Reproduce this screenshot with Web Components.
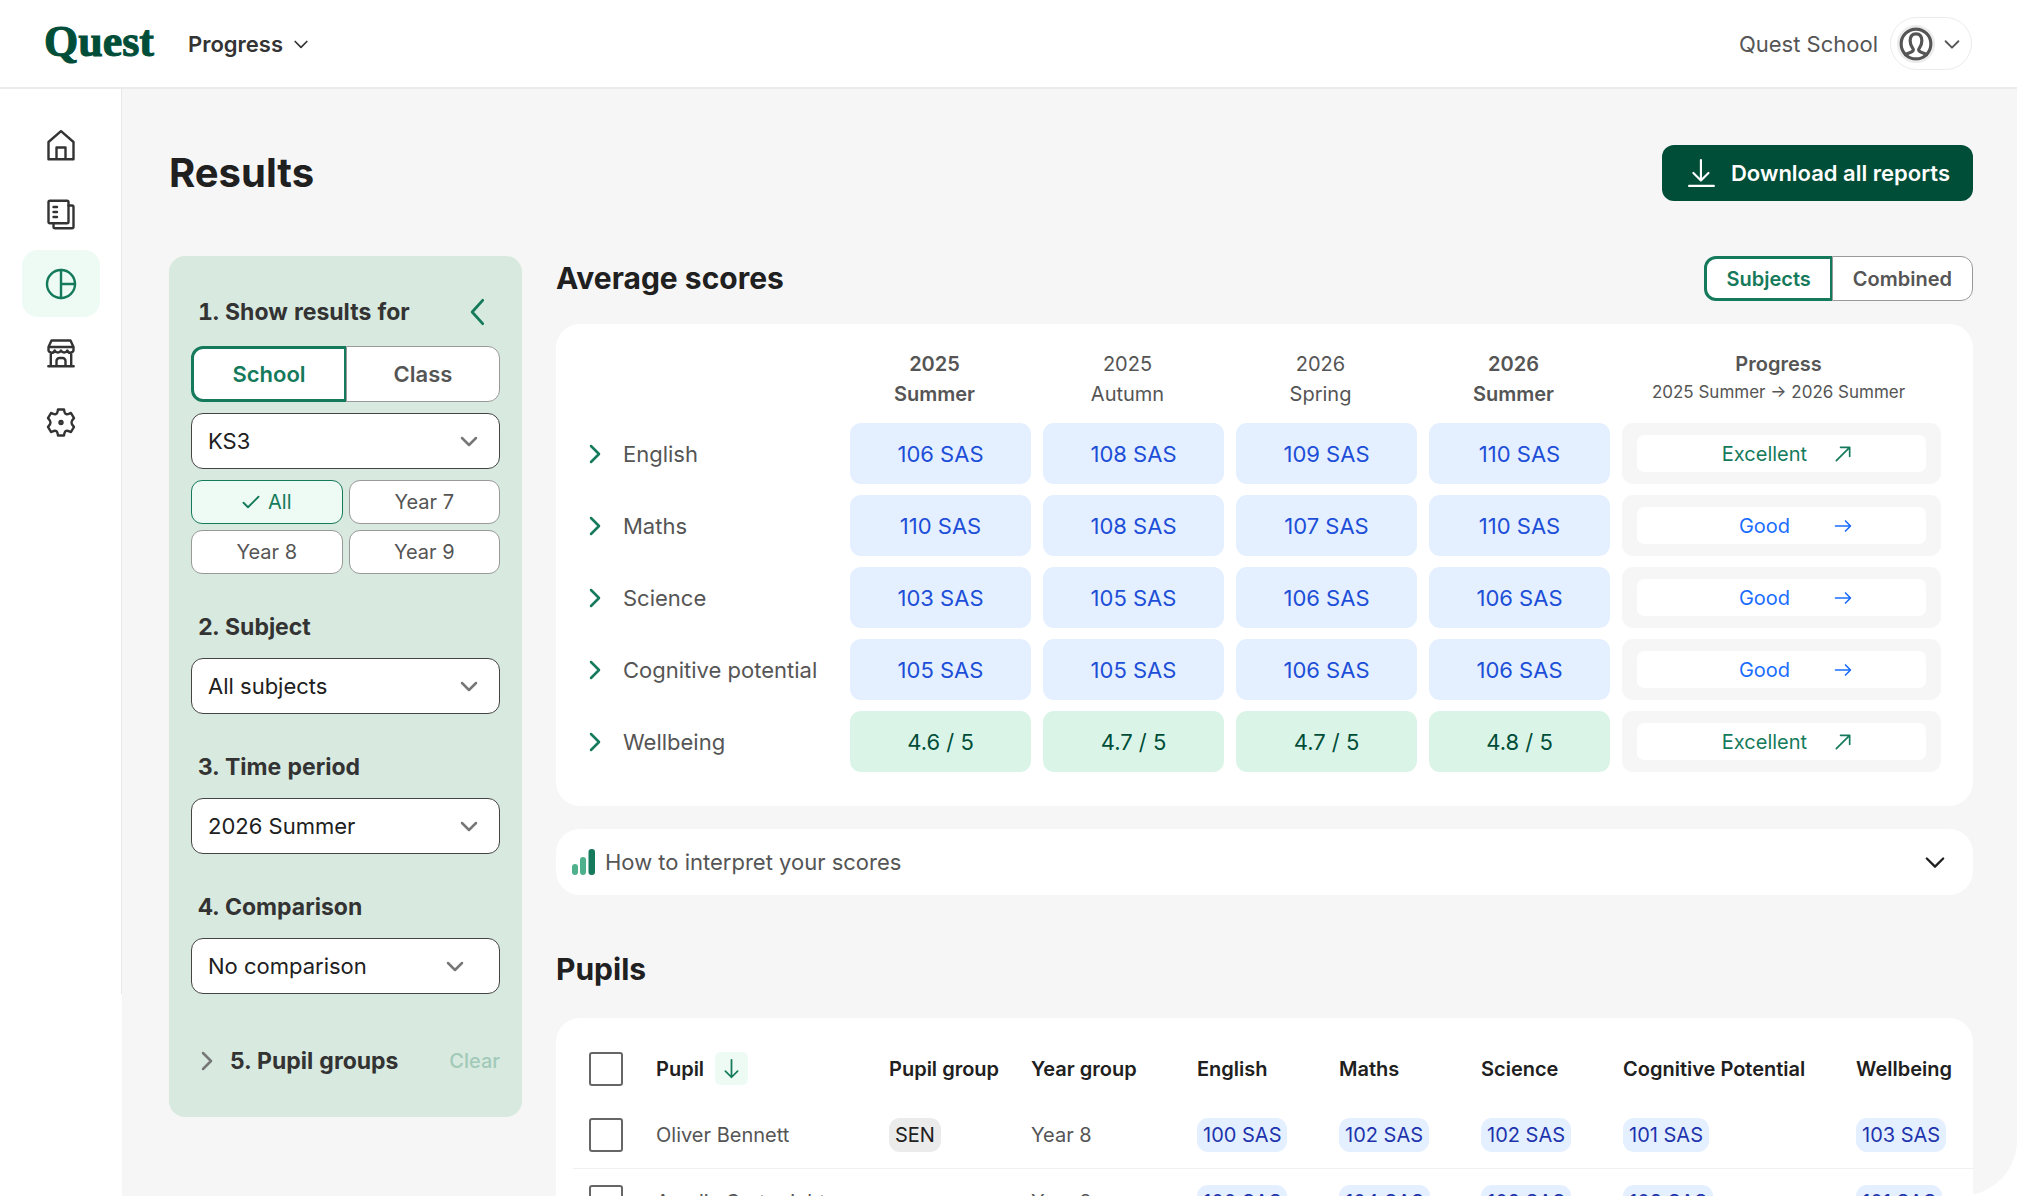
<!DOCTYPE html>
<html lang="en">
<head>
<meta charset="utf-8">
<meta name="viewport" content="width=device-width, initial-scale=1">
<title>Quest - Results</title>
<style>
    :root{
        --green-900: #004d38;
        --green-600: #157a5b;
        --green-100: #daf5e8;
        --green-50: #edfbf4;
        --panel: #d8e9df;
        --blue-100: #e4f0ff;
        --blue-700: #1d4ed8;
        --blue-500: #1a6dff;
        --blue-900: #1e34ad;
        --bg-page: #f6f6f6;
        --line: #ebebeb;
        --text: #202020;
        --text-soft: #333333;
        --text-muted: #555555;
    }
    body{
        margin:0;
        font-family: Inter, "Liberation Sans", sans-serif;
        font-size: 22px;
        color: var(--text-muted);
        background: #fff;
    }
</style>
</head>
<body>
<quest-app></quest-app>

<script>
const ICONS = {
    'chevron-down': '<path d="M5 9l7 7 7-7"/>',
    'chevron-right': '<path d="M8 4l8 8-8 8"/>',
    'chevron-left': '<path d="M16 2L7 12l9 10"/>',
    'arrow-right': '<path d="M3 12h18M15 6l6 6-6 6"/>',
    'arrow-up-right': '<path d="M4 20L20 4M9 4h11v11"/>',
    'arrow-down': '<path d="M12 2v20M5 15l7 7 7-7"/>',
    'check': '<path d="M2 13l6 6L22 5"/>',
    'download': '<path d="M12 1v19M5 13l7 7 7-7M1 25h23"/>',
    'home': '<path d="M3.500 12L16 1.200 28.500 12v17.300h-25zM11.500 29V17.500h9V29"/>',
    'reports': '<rect x="3.500" y="1.700" width="20" height="22.500" rx="1.500"/><path d="M23.500 6.500H27a1.500 1.500 0 0 1 1.500 1.500v19.800a1.500 1.500 0 0 1-1.500 1.500H10a1.500 1.500 0 0 1-1.500-1.500v-3.500M8.500 8h3.500M8.500 13h3.500M8.500 18h3.500"/>',
    'results': '<circle cx="16" cy="16" r="14"/><path d="M16 2v28M16 16h14"/>',
    'store': '<path d="M6.500 3.500h19l3 6.500h-25zM5.800 15.500V29M26.200 15.500V29M3.300 29.200h25.400M3.500 10v2a3.200 3.200 0 0 0 6.200 1.500 3.500 3.500 0 0 0 6.300 0 3.500 3.500 0 0 0 6.300 0A3.200 3.200 0 0 0 28.500 12v-2M11.500 29v-5a3 3 0 0 1 3-3h3a3 3 0 0 1 3 3v5"/>',
    'settings': '<path d="M13 3.500h6c.3 1.500.3 4 2.200 4.600 1.800.6 3.200-.8 4.800-1.100l3 5.200c-1 1.200-2.500 2.300-2.500 4.300s1.500 3.100 2.500 4.300l-3 5.200c-1.600-.3-3-1.700-4.800-1.100-1.900.6-1.900 3.100-2.200 4.600h-6c-.3-1.500-.3-4-2.200-4.600-1.800-.6-3.200.8-4.800 1.100l-3-5.200c1-1.200 2.500-2.300 2.500-4.300s-1.500-3.100-2.500-4.300L6 7c1.600.3 3 1.700 4.800 1.100 1.900-.6 1.900-3.100 2.200-4.600z"/><circle cx="16" cy="16.500" r="1.500"/>',
    'avatar': '<circle cx="16" cy="16" r="14"/><path d="M6 26c2-1.800 7.500-1.500 7.500-4.500 0-2-3-3-3-8.500 0-4 2-6.500 5.500-6.500s5.500 2.500 5.500 6.500c0 5.500-3 6.500-3 8.500 0 3 5.500 2.700 7.500 4.500"/>'
};
const WIDE_BOX = ['home', 'reports', 'results', 'store', 'settings', 'avatar'];

class QuestIcon extends HTMLElement{
    static get observedAttributes() {
    return ['name'];
    }
    constructor() {
    super();
    this.attachShadow({ mode: 'open' });
    }
    connectedCallback() {
    this.render();
    }
    attributeChangedCallback(name, oldValue, newValue) {
    if (oldValue !== newValue) {
    this.render();
    }
    }
    render() {
        const name = this.getAttribute('name');
        let box = WIDE_BOX.includes(name) ? 32 : 24;
        if (name === 'download') box = 26;
        this.shadowRoot.innerHTML = /*html*/ `
        <style>
            :host{
                display:block;
                flex:none;
                width: var(--icon-size, 24px);
                height: var(--icon-size, 24px);
            }
            svg{
                display:block;
                width:100%;
                height:100%;
                fill:none;
                stroke:currentColor;
                stroke-width: var(--icon-stroke, 2);
                stroke-linecap:round;
                stroke-linejoin:round;
            }
        </style>
        <svg viewBox="0 0 ${box} ${box}" aria-hidden="true">${ICONS[name] || ''}</svg>
        `;
    }
}
customElements.define("quest-icon", QuestIcon);

class QuestHeader extends HTMLElement{
    constructor() {
    super();
    this.attachShadow({ mode: 'open' });
    }
    connectedCallback() {
    this.render();
    }
    render() {
        this.shadowRoot.innerHTML = /*html*/ `
        <style>
            :host{
                display:block;
                background:#fff;
                border-bottom:2px solid var(--line);
            }
            header{
                display:flex;
                align-items:center;
                gap:34px;
                height:87px;
                padding:0 45px 0 44px;
            }
            button{
                font:inherit;
                color:inherit;
                background:none;
                border:0;
                padding:0;
                display:flex;
                align-items:center;
            }
            .logo{
                padding-bottom:4px;
                font-family:"Liberation Serif", serif;
                font-weight:700;
                font-size:44px;
                line-height:48px;
                color:var(--green-900);
                text-decoration:none;
                -webkit-text-stroke:1px currentColor;
            }
            .product{
                font-weight:600;
                color:var(--text-soft);
                gap:8px;
                --icon-size:20px;
            }
            .account{
                margin-left:auto;
                display:flex;
                align-items:center;
                gap:12px;
            }
            .user{
                height:53px;
                padding:0 8px 0 6px;
                gap:6px;
                border:1px solid var(--line);
                border-radius:27px;
                --icon-size:22px;
            }
            .avatar{
                border:2px solid var(--line);
                border-radius:50%;
                --icon-size:34px;
                --icon-stroke:3;
            }
        </style>
        <header>
            <a class="logo" href="#">Quest</a>
            <button class="product" type="button">Progress <quest-icon name="chevron-down"></quest-icon></button>
            <div class="account">
                <span>Quest School</span>
                <button class="user" type="button" aria-label="Account menu">
                    <span class="avatar"><quest-icon name="avatar"></quest-icon></span>
                    <quest-icon name="chevron-down"></quest-icon>
                </button>
            </div>
        </header>
        `;
    }
}
customElements.define("quest-header", QuestHeader);

class QuestSidebar extends HTMLElement{
    constructor() {
    super();
    this.attachShadow({ mode: 'open' });
    }
    connectedCallback() {
    this.render();
    }
    render() {
        const items = [
            ['home', 'Home'],
            ['reports', 'Reports'],
            ['results', 'Results'],
            ['store', 'Store'],
            ['settings', 'Settings']
        ];
        this.shadowRoot.innerHTML = /*html*/ `
        <style>
            :host{
                display:block;
                flex:none;
                width:122px;
                background:#fff;
            }
            nav{
                display:grid;
                justify-items:center;
                gap:2px;
                padding:23px 0 539px;
                border-right:1px solid #e8e8e8;
            }
            a{
                display:grid;
                place-items:center;
                width:78px;
                height:67px;
                border-radius:16px;
                color:var(--text-soft);
                --icon-size:32px;
                --icon-stroke:2.4;
            }
            a.active{
                color:var(--green-600);
                background:var(--green-50);
            }
        </style>
        <nav aria-label="Main">
            ${items.map(([icon, label]) => `<a href="#" aria-label="${label}" class="${icon === 'results' ? 'active' : ''}"><quest-icon name="${icon}"></quest-icon></a>`).join('')}
        </nav>
        `;
    }
}
customElements.define("quest-sidebar", QuestSidebar);

// two-way switch, first option is the selected one
class QuestToggle extends HTMLElement{
    constructor() {
    super();
    this.attachShadow({ mode: 'open' });
    }
    connectedCallback() {
    this.render();
    this._setupEventListeners();
    }
    _setupEventListeners() {
        this.shadowRoot.addEventListener('click', (e) => {
            const button = e.target.closest('button');
            if (!button) return;
            this.shadowRoot.querySelectorAll('button').forEach((b) => {
                b.setAttribute('aria-pressed', b === button);
            });
        });
    }
    render() {
        const options = this.getAttribute('options').split(',');
        this.shadowRoot.innerHTML = /*html*/ `
        <style>
            :host{
                display:flex;
            }
            button{
                flex:1 1 auto;
                height:56px;
                padding:0 20px;
                font:inherit;
                font-weight:600;
                color:var(--text-muted);
                background:#fff;
                border:1px solid #999;
            }
            button:first-of-type{
                border-radius:12px 0 0 12px;
            }
            button:last-of-type{
                border-radius:0 12px 12px 0;
            }
            button[aria-pressed="true"]{
                color:var(--green-600);
                border:3px solid var(--green-600);
                border-right-width:2px;
                padding:0 19px;
            }
            :host([small]) button{
                height:45px;
                font-size:20px;
            }
            :host([block]) button{
                flex:1 1 0;
            }
        </style>
        ${options.map((text, i) => `<button type="button" aria-pressed="${i === 0}">${text}</button>`).join('')}
        `;
    }
}
customElements.define("quest-toggle", QuestToggle);

class QuestSelect extends HTMLElement{
    constructor() {
    super();
    this.attachShadow({ mode: 'open' });
    }
    connectedCallback() {
    this.render();
    }
    render() {
        const number = this.getAttribute('number');
        const label = this.getAttribute('label');
        this.shadowRoot.innerHTML = /*html*/ `
        <style>
            :host{
                display:block;
            }
            label{
                display:flex;
                gap:6px;
                font-size:23px;
                line-height:28px;
                margin-bottom:17px;
                font-weight:700;
                font-variant-numeric:tabular-nums;
                color:var(--text-soft);
            }
            label span{
                width:28px;
                text-align:right;
            }
            .box{
                display:grid;
                align-items:center;
            }
            select, quest-icon{
                grid-area:1 / 1;
            }
            select{
                appearance:none;
                width:100%;
                height:56px;
                padding:0 56px 0 16px;
                font:inherit;
                color:var(--text);
                background:#fff;
                border:1px solid #444;
                border-radius:12px;
            }
            quest-icon{
                justify-self:end;
                margin-right:19px;
                color:#777;
                pointer-events:none;
                --icon-stroke:2.5;
            }
            :host([inset]) quest-icon{
                margin-right:33px;
            }
        </style>
        ${number ? `<label for="field"><span>${number}.</span>${label}</label>` : ''}
        <div class="box">
            <select id="field" aria-label="${label}"><option>${this.getAttribute('value')}</option></select>
            <quest-icon name="chevron-down"></quest-icon>
        </div>
        `;
    }
}
customElements.define("quest-select", QuestSelect);

class QuestFilters extends HTMLElement{
    constructor() {
    super();
    this.attachShadow({ mode: 'open' });
    }
    connectedCallback() {
    this.render();
    }
    render() {
        this.shadowRoot.innerHTML = /*html*/ `
        <style>
            :host{
                display:block;
                box-sizing:border-box;
                flex:none;
                width:353px;
                padding:42px 22px;
                border-radius:16px;
                background:var(--panel);
            }
            h2{
                display:flex;
                gap:6px;
                margin:0;
                font-size:23px;
                line-height:28px;
                font-weight:700;
                font-variant-numeric:tabular-nums;
                color:var(--text-soft);
            }
            h2 span{
                width:28px;
                text-align:right;
            }
            button{
                font:inherit;
                border:0;
                padding:0;
                background:none;
            }
            .row{
                display:flex;
                align-items:center;
                justify-content:space-between;
            }
            .collapse{
                height:28px;
                margin-right:8px;
                color:var(--green-600);
                --icon-size:28px;
                --icon-stroke:2.4;
            }
            .choices{
                display:grid;
                gap:11px;
                margin-top:20px;
            }
            .years{
                display:grid;
                grid-template-columns:1fr 1fr;
                gap:6px;
            }
            .years button{
                display:flex;
                align-items:center;
                justify-content:center;
                gap:8px;
                height:44px;
                font-size:20px;
                color:var(--text-muted);
                background:#fff;
                border:1px solid #999;
                border-radius:11px;
                --icon-size:18px;
                --icon-stroke:2.5;
            }
            .years button[aria-pressed="true"]{
                color:var(--green-600);
                background:var(--green-50);
                border-color:var(--green-600);
            }
            .fields{
                display:grid;
                gap:39px;
                margin:39px 0 53px;
            }
            .groups{
                display:flex;
                align-items:center;
                gap:4px;
                padding-left:4px;
                color:#777;
                --icon-stroke:2.5;
            }
            .clear{
                font-size:20px;
                font-weight:500;
                color:#a2cab9;
            }
        </style>
        <div class="row">
            <h2><span>1.</span>Show results for</h2>
            <button class="collapse" type="button" aria-label="Hide filters"><quest-icon name="chevron-left"></quest-icon></button>
        </div>
        <div class="choices">
            <quest-toggle block options="School,Class"></quest-toggle>
            <quest-select label="Key stage" value="KS3"></quest-select>
            <div class="years">
                <button type="button" aria-pressed="true"><quest-icon name="check"></quest-icon>All</button>
                <button type="button">Year 7</button>
                <button type="button">Year 8</button>
                <button type="button">Year 9</button>
            </div>
        </div>
        <div class="fields">
            <quest-select number="2" label="Subject" value="All subjects"></quest-select>
            <quest-select number="3" label="Time period" value="2026 Summer"></quest-select>
            <quest-select inset number="4" label="Comparison" value="No comparison"></quest-select>
        </div>
        <div class="row">
            <div class="groups">
                <quest-icon name="chevron-right"></quest-icon>
                <h2><span>5.</span>Pupil groups</h2>
            </div>
            <button class="clear" type="button">Clear</button>
        </div>
        `;
    }
}
customElements.define("quest-filters", QuestFilters);

class QuestScores extends HTMLElement{
    constructor() {
    super();
    this.attachShadow({ mode: 'open' });
    this.rows = [
        ['English', '106 SAS', '108 SAS', '109 SAS', '110 SAS', 'Excellent'],
        ['Maths', '110 SAS', '108 SAS', '107 SAS', '110 SAS', 'Good'],
        ['Science', '103 SAS', '105 SAS', '106 SAS', '106 SAS', 'Good'],
        ['Cognitive potential', '105 SAS', '105 SAS', '106 SAS', '106 SAS', 'Good'],
        ['Wellbeing', '4.6 / 5', '4.7 / 5', '4.7 / 5', '4.8 / 5', 'Excellent']
    ];
    }
    connectedCallback() {
    this.render();
    }
    _row([subject, ...cells]) {
        const progress = cells.pop();
        const good = progress === 'Good';
        return `
        <tr>
            <th scope="row"><button type="button"><quest-icon name="chevron-right"></quest-icon>${subject}</button></th>
            ${cells.map((c) => `<td class="score ${c.includes('/') ? 'wellbeing' : ''}">${c}</td>`).join('')}
            <td class="progress"><div class="${good ? 'good' : ''}"><span>${progress}</span><quest-icon name="${good ? 'arrow-right' : 'arrow-up-right'}"></quest-icon></div></td>
        </tr>`;
    }
    render() {
        this.shadowRoot.innerHTML = /*html*/ `
        <style>
            :host{
                display:block;
                padding:14px 20px 23px 21px;
                border-radius:24px;
                background:#fff;
            }
            table{
                width:100%;
                table-layout:fixed;
                border-collapse:separate;
                border-spacing:12px 11px;
            }
            th, td{
                padding:0;
            }
            .col-score{
                width:181px;
            }
            .col-progress{
                width:319px;
            }
            thead th{
                padding:0 12px 3px 0;
                font-size:20px;
                line-height:30px;
                font-weight:400;
                vertical-align:top;
            }
            thead th.strong, thead strong{
                font-weight:600;
            }
            thead small{
                display:block;
                font-size:17px;
                line-height:26px;
            }
            thead th:last-child{
                padding-right:6px;
            }
            tbody th{
                font-weight:400;
                text-align:left;
            }
            tbody button{
                display:flex;
                align-items:center;
                gap:16px;
                padding:0;
                margin-left:-6px;
                font:inherit;
                color:inherit;
                background:none;
                border:0;
            }
            tbody button quest-icon{
                color:var(--green-600);
                --icon-stroke:2.5;
            }
            td{
                height:61px;
                border-radius:11px;
                text-align:center;
            }
            .score{
                color:var(--blue-700);
                background:var(--blue-100);
            }
            .score.wellbeing{
                color:var(--green-900);
                background:var(--green-100);
            }
            .progress{
                padding:0 15px;
                background:var(--bg-page);
                font-size:20px;
            }
            .progress div{
                display:flex;
                align-items:center;
                justify-content:center;
                gap:14px;
                height:37px;
                border-radius:7px;
                background:#fff;
                color:var(--green-600);
                --icon-size:20px;
            }
            .progress span{
                width:108px;
            }
            .progress .good{
                color:var(--blue-500);
            }
        </style>
        <table>
            <colgroup><col><col class="col-score"><col class="col-score"><col class="col-score"><col class="col-score"><col class="col-progress"></colgroup>
            <thead>
                <tr>
                    <td></td>
                    <th class="strong" scope="col">2025<br>Summer</th>
                    <th scope="col">2025<br>Autumn</th>
                    <th scope="col">2026<br>Spring</th>
                    <th class="strong" scope="col">2026<br>Summer</th>
                    <th scope="col"><strong>Progress</strong><small>2025 Summer → 2026 Summer</small></th>
                </tr>
            </thead>
            <tbody>${this.rows.map((r) => this._row(r)).join('')}</tbody>
        </table>
        `;
    }
}
customElements.define("quest-scores", QuestScores);

class QuestAccordion extends HTMLElement{
    constructor() {
    super();
    this.attachShadow({ mode: 'open' });
    }
    connectedCallback() {
    this.render();
    }
    render() {
        this.shadowRoot.innerHTML = /*html*/ `
        <style>
            :host{
                display:block;
                border-radius:24px;
                background:#fff;
            }
            button{
                display:flex;
                align-items:center;
                gap:9px;
                width:100%;
                height:66px;
                padding:0 24px 0 16px;
                font:inherit;
                color:inherit;
                background:none;
                border:0;
            }
            quest-icon{
                margin-left:auto;
                color:var(--text);
                --icon-size:28px;
                --icon-stroke:2;
            }
        </style>
        <button type="button" aria-expanded="false">
            <svg width="24" height="26" viewBox="0 0 24 26" aria-hidden="true">
                <rect x="0" y="15" width="6" height="11" rx="3" fill="#4fb08c"/>
                <rect x="8" y="8" width="6" height="18" rx="3" fill="#4fb08c"/>
                <rect x="16.500" y="0" width="6.500" height="26" rx="3" fill="#157a5b"/>
            </svg>
            <slot></slot>
            <quest-icon name="chevron-down"></quest-icon>
        </button>
        `;
    }
}
customElements.define("quest-accordion", QuestAccordion);

class QuestPupils extends HTMLElement{
    constructor() {
    super();
    this.attachShadow({ mode: 'open' });
    this.rows = [
        ['Oliver Bennett', 'SEN', 'Year 8', 100, 102, 102, 101, 103],
        ['Amelia Cartwright', '', 'Year 8', 100, 104, 102, 103, 101]
    ];
    }
    connectedCallback() {
    this.render();
    }
    _row([name, group, year, ...scores]) {
        return `
        <tr>
            <td><input type="checkbox" aria-label="Select ${name}"></td>
            <td>${name}</td>
            <td>${group ? `<span class="tag">${group}</span>` : ''}</td>
            <td>${year}</td>
            ${scores.map((s) => `<td><span class="tag sas">${s} SAS</span></td>`).join('')}
        </tr>`;
    }
    render() {
        const subjects = ['English', 'Maths', 'Science', 'Cognitive Potential', 'Wellbeing'];
        const widths = [83, 233, 142, 166, 142, 142, 142, 233, 117];
        this.shadowRoot.innerHTML = /*html*/ `
        <style>
            :host{
                display:block;
                padding:17px 0 17px 17px;
                border-radius:24px;
                background:#fff;
            }
            table{
                width:100%;
                table-layout:fixed;
                border-collapse:collapse;
                font-size:20px;
            }
            th, td{
                height:66px;
                padding:0;
                text-align:left;
                white-space:nowrap;
            }
            th{
                height:67px;
                font-weight:600;
                color:var(--text);
            }
            tbody tr + tr{
                border-top:1px solid #f0f0f0;
            }
            th:first-child, td:first-child{
                padding-left:16px;
            }
            input{
                appearance:none;
                display:block;
                box-sizing:border-box;
                width:34px;
                height:34px;
                margin:0;
                border:2px solid #666;
                border-radius:3px;
                background:#fff;
            }
            .sort{
                display:flex;
                align-items:center;
                gap:11px;
            }
            .sort button{
                width:33px;
                height:33px;
                padding:6px;
                border:0;
                border-radius:6px;
                color:var(--green-600);
                background:var(--green-50);
                --icon-size:21px;
            }
            .tag{
                display:inline-block;
                padding:0 6px;
                line-height:34px;
                border-radius:11px;
                color:var(--text);
                background:#ebebeb;
            }
            .tag.sas{
                color:var(--blue-900);
                background:var(--blue-100);
            }
        </style>
        <table>
            <colgroup>${widths.map((w) => `<col style="width:${w}px">`).join('')}</colgroup>
            <thead>
                <tr>
                    <th><input type="checkbox" aria-label="Select all pupils"></th>
                    <th scope="col"><div class="sort">Pupil <button type="button" aria-label="Sort by pupil"><quest-icon name="arrow-down"></quest-icon></button></div></th>
                    <th scope="col">Pupil group</th>
                    <th scope="col">Year group</th>
                    ${subjects.map((s) => `<th scope="col">${s}</th>`).join('')}
                </tr>
            </thead>
            <tbody>${this.rows.map((r) => this._row(r)).join('')}</tbody>
        </table>
        `;
    }
}
customElements.define("quest-pupils", QuestPupils);

class QuestApp extends HTMLElement{
    constructor() {
    super();
    this.attachShadow({ mode: 'open' });
    }
    connectedCallback() {
    this.render();
    }
    render() {
        this.shadowRoot.innerHTML = /*html*/ `
        <style>
            :host{
                display:flex;
                flex-direction:column;
                height:100vh;
                overflow:hidden;
            }
            .body{
                flex:1;
                min-height:0;
                display:flex;
            }
            main{
                flex:1;
                min-width:0;
                overflow:hidden;
                padding:56px 44px 0 47px;
                border-radius:0 0 56px 0;
                background:var(--bg-page);
            }
            .title, .heading{
                display:flex;
                align-items:center;
                justify-content:space-between;
            }
            .title{
                margin-bottom:55px;
            }
            h1, h2{
                margin:0;
                font-weight:700;
                color:var(--text);
            }
            h1{
                font-size:40px;
                line-height:56px;
            }
            h2{
                font-size:30px;
                line-height:45px;
            }
            .download{
                display:flex;
                align-items:center;
                gap:15px;
                height:56px;
                padding:0 23px 0 26px;
                font:inherit;
                font-weight:600;
                color:#fff;
                background:var(--green-900);
                border:0;
                border-radius:12px;
                --icon-size:28px;
            }
            .columns{
                display:flex;
                align-items:flex-start;
                gap:34px;
            }
            .results{
                flex:1;
                min-width:0;
            }
            quest-scores{
                margin:23px 0;
            }
            .pupils{
                margin:52px 0 26px;
            }
        </style>
        <quest-header></quest-header>
        <div class="body">
            <quest-sidebar></quest-sidebar>
            <main>
                <div class="title">
                    <h1>Results</h1>
                    <button class="download" type="button"><quest-icon name="download"></quest-icon>Download all reports</button>
                </div>
                <div class="columns">
                    <quest-filters></quest-filters>
                    <section class="results">
                        <div class="heading">
                            <h2>Average scores</h2>
                            <quest-toggle small options="Subjects,Combined"></quest-toggle>
                        </div>
                        <quest-scores></quest-scores>
                        <quest-accordion>How to interpret your scores</quest-accordion>
                        <h2 class="pupils">Pupils</h2>
                        <quest-pupils></quest-pupils>
                    </section>
                </div>
            </main>
        </div>
        `;
    }
}
customElements.define("quest-app", QuestApp);
</script>
</body>
</html>
